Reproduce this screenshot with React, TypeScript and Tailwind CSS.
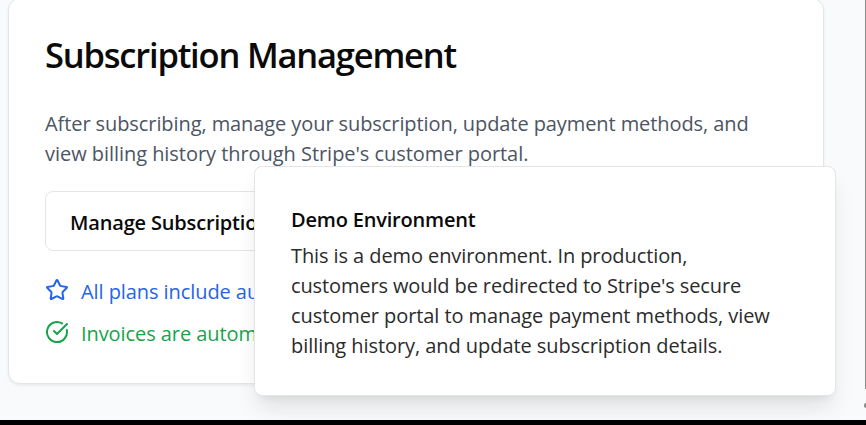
import { CircleCheckBig, Star } from "lucide-react";

const body = "block whitespace-nowrap text-[20px] leading-[30px]";

export default function App() {
  return (
    <div className="relative flex h-[425px] w-[866px] flex-col overflow-hidden bg-black font-['Open_Sans','Noto_Sans',sans-serif] text-[#0a0a0a]">
      <main className="flex h-[420px] shrink-0 justify-between overflow-hidden bg-[#f9fafb] pl-2">
        <section className="-mt-0.5 flex h-[386px] w-[816px] flex-col items-start rounded-xl border border-[#e5e5e5] bg-white px-9 pt-9 shadow-[0_1.5px_3px_0_rgba(0,0,0,0.06)]">
          <h1 className="whitespace-nowrap text-[34.5px] leading-[40px] font-semibold tracking-[-1.2px]">
            Subscription Management
          </h1>
          <p className="mt-[34px] text-[#4b5563]">
            <span className={`${body} tracking-[-0.085px]`}>After subscribing, manage your subscription, update payment methods, and</span>
            <span className={`${body} tracking-[-0.045px]`}>view billing history through Stripe's customer portal.</span>
          </p>
          <button className="mt-[22px] flex h-[60px] w-[260px] items-center rounded-lg border border-[#e5e5e5] pt-1 pl-6">
            <span className="text-left text-[20px] leading-[30px] font-semibold tracking-[-0.17px] whitespace-nowrap">
              Manage Subscriptio
            </span>
          </button>
          <div className="mt-[25px] flex flex-col gap-[11px]">
            <div className="flex items-start gap-3 text-[#2563eb]">
              <Star size={24} className="mt-0.5 shrink-0" />
              <span className={`${body} pt-px tracking-[-0.075px]`}>All plans include au</span>
            </div>
            <div className="flex items-start gap-3 text-[#16a34a]">
              <CircleCheckBig size={24} className="mt-0.5 shrink-0" />
              <span className={`${body} pt-px tracking-[-0.075px]`}>Invoices are autom</span>
            </div>
          </div>
        </section>
        <div className="flex w-0.5 flex-col items-end">
          <div className="h-[389px] w-px bg-[#8b8b8b]" />
          <div className="mt-3.5 h-[5px] w-0.5 rounded-l-full bg-[#8b8b8b]" />
        </div>
      </main>
      <aside className="absolute top-[166px] left-[254px] h-[230px] w-[582px] rounded-lg border border-[#e5e5e5] bg-white px-9 pt-[38px] shadow-[0_15px_22.5px_-4.5px_rgba(0,0,0,0.1),0_6px_9px_-6px_rgba(0,0,0,0.1)]">
        <h2 className="text-[20px] leading-[30px] font-semibold tracking-[-0.19px] whitespace-nowrap">Demo Environment</h2>
        <p className="mt-1.5 text-[#2b2b2b]">
          <span className={`${body} tracking-[-0.09px]`}>This is a demo environment. In production,</span>
          <span className={`${body} tracking-[-0.12px]`}>customers would be redirected to Stripe's secure</span>
          <span className={`${body} tracking-[-0.07px]`}>customer portal to manage payment methods, view</span>
          <span className={`${body} tracking-[-0.06px]`}>billing history, and update subscription details.</span>
        </p>
      </aside>
      <div className="absolute bottom-0 left-0 h-[5px] w-full bg-black" />
    </div>
  );
}
